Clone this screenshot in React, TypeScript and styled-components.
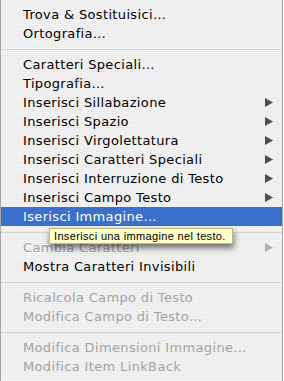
import React from 'react';
import styled, { createGlobalStyle } from 'styled-components';

const GlobalStyle = createGlobalStyle`
  html, body {
    margin: 0;
    padding: 0;
    background: #ffffff;
  }
  body {
    font-family: 'DejaVu Sans', 'Liberation Sans', sans-serif;
    -webkit-font-smoothing: antialiased;
  }
`;

type Entry =
  | { kind: 'item'; label: string; disabled?: boolean; submenu?: boolean; selected?: boolean; tip?: string }
  | { kind: 'sep' };

const entries: Entry[] = [
  { kind: 'item', label: 'Trova & Sostituisici…' },
  { kind: 'item', label: 'Ortografia…' },
  { kind: 'sep' },
  { kind: 'item', label: 'Caratteri Speciali…' },
  { kind: 'item', label: 'Tipografia…' },
  { kind: 'item', label: 'Inserisci Sillabazione', submenu: true },
  { kind: 'item', label: 'Inserisci Spazio', submenu: true },
  { kind: 'item', label: 'Inserisci Virgolettatura', submenu: true },
  { kind: 'item', label: 'Inserisci Caratteri Speciali', submenu: true },
  { kind: 'item', label: 'Inserisci Interruzione di Testo', submenu: true },
  { kind: 'item', label: 'Inserisci Campo Testo', submenu: true },
  { kind: 'item', label: 'Iserisci Immagine…', selected: true, tip: 'Inserisci una immagine nel testo.' },
  { kind: 'sep' },
  { kind: 'item', label: 'Cambia Caratteri', disabled: true, submenu: true },
  { kind: 'item', label: 'Mostra Caratteri Invisibili' },
  { kind: 'sep' },
  { kind: 'item', label: 'Ricalcola Campo di Testo', disabled: true },
  { kind: 'item', label: 'Modifica Campo di Testo…', disabled: true },
  { kind: 'sep' },
  { kind: 'item', label: 'Modifica Dimensioni Immagine…', disabled: true },
  { kind: 'item', label: 'Modifica Item LinkBack', disabled: true }
];

const Menu = styled.div`
  width: 281px;
  height: 376px;
  padding: 5px 0 4px;
  border: 1px solid #a6a6a6;
  border-top: none;
  display: flex;
  flex-direction: column;
  background: repeating-linear-gradient(to bottom, #f3f3f3 0px, #f3f3f3 1px, #ebebeb 1px, #ebebeb 2px);
`;

const Row = styled.div<{ $disabled?: boolean; $selected?: boolean }>`
  position: relative;
  height: 19px;
  flex: none;
  display: flex;
  align-items: center;
  padding: 0 9px 0 22px;
  font-size: 13px;
  line-height: 19px;
  letter-spacing: 0.35px;
  white-space: nowrap;
  color: ${({ $disabled, $selected }) => ($selected ? '#ffffff' : $disabled ? '#a3a3a3' : '#000000')};
  background: ${({ $selected }) => ($selected ? '#3b6fcc' : 'transparent')};
`;

const Label = styled.span`
  flex: 1;
`;

const Arrow = styled.svg<{ $disabled?: boolean }>`
  width: 8px;
  height: 9px;
  fill: ${({ $disabled }) => ($disabled ? '#b0b0b0' : '#4e4e4e')};
`;

const Separator = styled.div`
  height: 12px;
  flex: none;
  display: flex;
  flex-direction: column;
  &::after {
    content: '';
    margin-top: 6px;
    height: 1px;
    background: #d4d4d4;
  }
`;

const Tooltip = styled.div`
  position: absolute;
  z-index: 2;
  top: 21px;
  left: 48px;
  width: 184px;
  height: 16px;
  box-sizing: border-box;
  padding: 0 0 0 4px;
  font-family: 'Liberation Sans', 'DejaVu Sans', sans-serif;
  font-size: 11px;
  line-height: 14px;
  letter-spacing: 0.35px;
  color: #000000;
  background: #ffffc7;
  border: 1px solid #b9b98c;
  box-shadow: 1px 4px 6px rgba(0, 0, 0, 0.55);
`;

export default function App() {
  return (
    <>
      <GlobalStyle />
      <Menu>
        {entries.map((e, i) =>
          e.kind === 'sep' ? (
            <Separator key={i} />
          ) : (
            <Row key={i} $disabled={e.disabled} $selected={e.selected}>
              <Label>{e.label}</Label>
              {e.submenu && (
                <Arrow $disabled={e.disabled} viewBox="0 0 8 9">
                  <polygon points="0,0 8,4.5 0,9" />
                </Arrow>
              )}
              {e.tip && <Tooltip>{e.tip}</Tooltip>}
            </Row>
          )
        )}
      </Menu>
    </>
  );
}
